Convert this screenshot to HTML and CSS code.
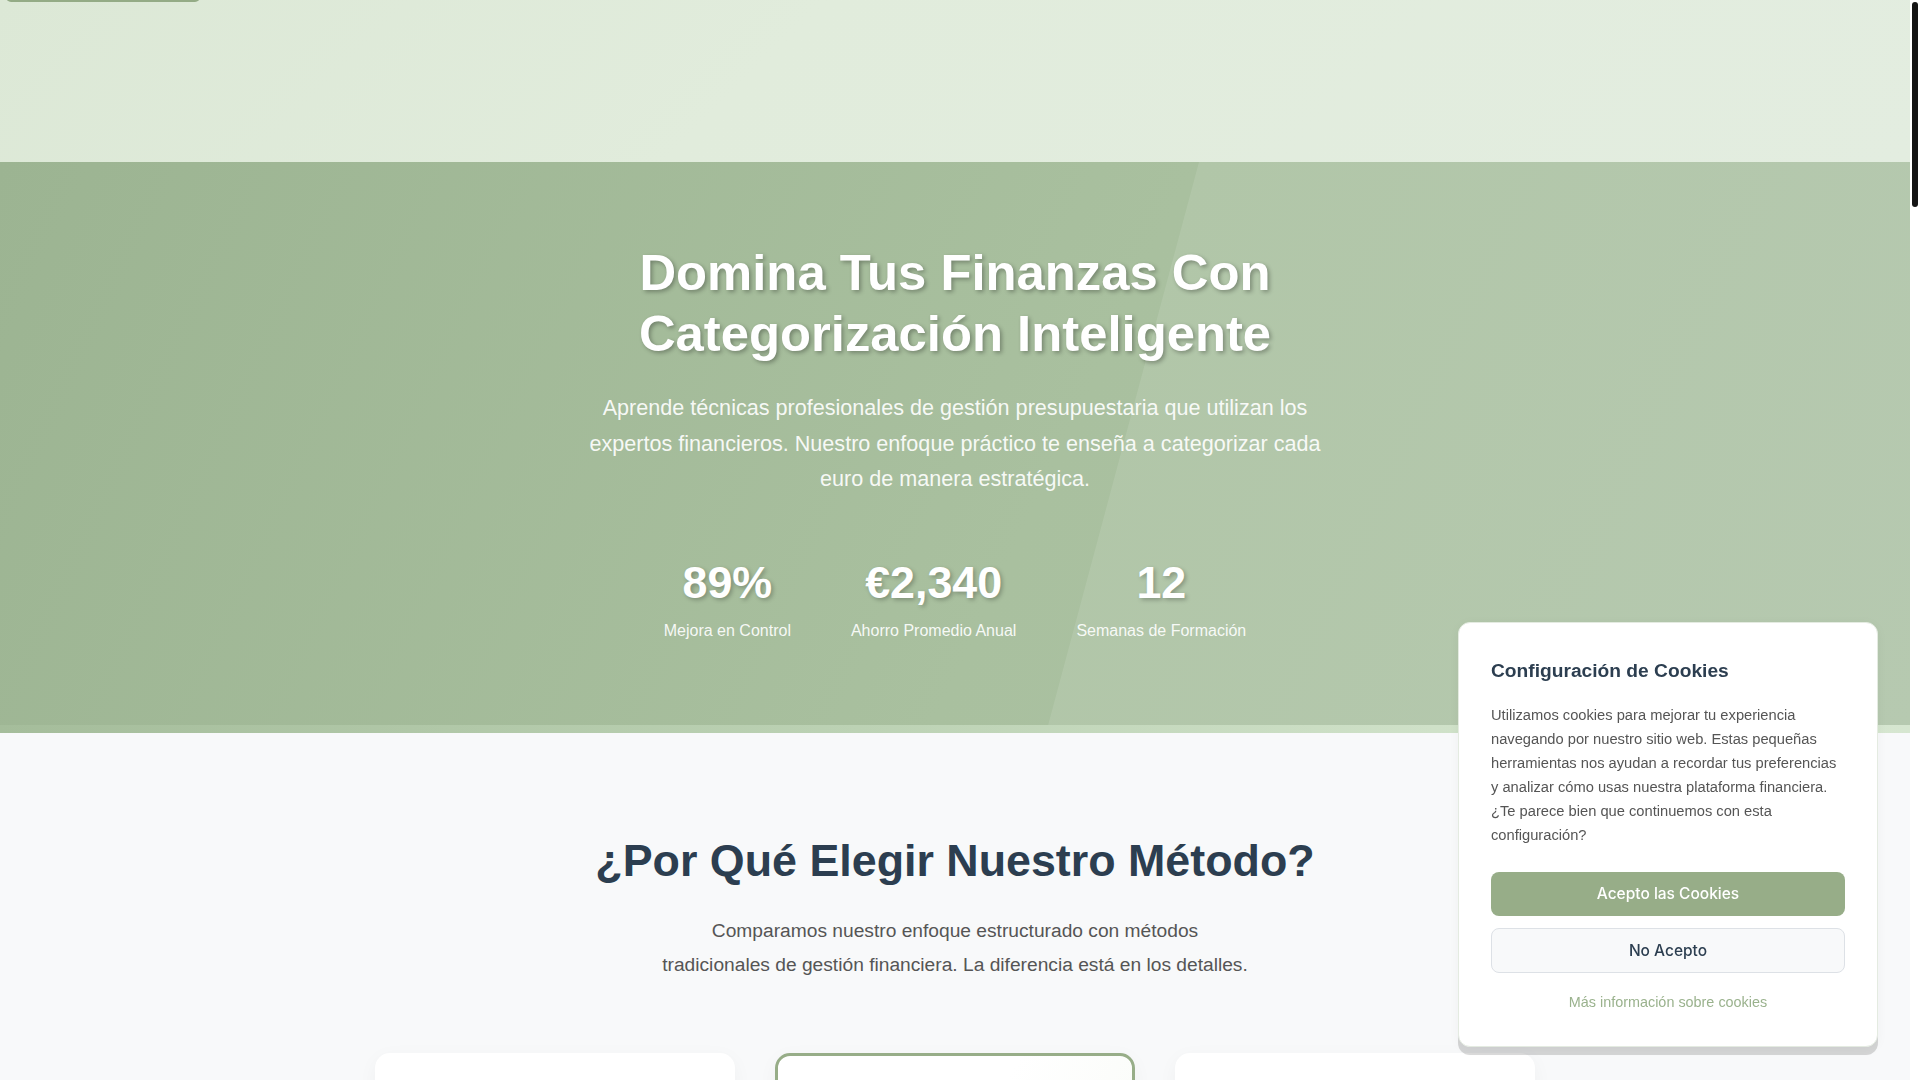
FILE: index.html
```html
<!DOCTYPE html>
<html lang="es">
<head>
    <meta charset="UTF-8">
    <meta name="viewport" content="width=device-width, initial-scale=1.0">
    <title>Categorización Inteligente de Presupuestos</title>
    <link rel="stylesheet" href="styles.css">
</head>
<body>
    <a class="skip-link" href="#inicio">Saltar al contenido</a>

    <!-- cabecera -->
    <header class="site-header"></header>

    <!-- hero -->
    <section class="hero" id="inicio">
        <div class="hero-content">
            <h1 class="hero-title">Domina Tus Finanzas Con Categorización Inteligente</h1>
            <p class="hero-text">
                Aprende técnicas profesionales de gestión presupuestaria que utilizan los expertos financieros. Nuestro enfoque práctico te enseña a categorizar cada euro de manera estratégica.
            </p>
            <div class="hero-stats">
                <div class="stat">
                    <div class="stat-number">89%</div>
                    <div class="stat-label">Mejora en Control</div>
                </div>
                <div class="stat">
                    <div class="stat-number">€2,340</div>
                    <div class="stat-label">Ahorro Promedio Anual</div>
                </div>
                <div class="stat">
                    <div class="stat-number">12</div>
                    <div class="stat-label">Semanas de Formación</div>
                </div>
            </div>
        </div>
    </section>

    <!-- comparativa -->
    <section class="compare">
        <h2 class="section-title">¿Por Qué Elegir Nuestro Método?</h2>
        <p class="section-text">
            Comparamos nuestro enfoque estructurado con métodos tradicionales de gestión financiera. La diferencia está en los detalles.
        </p>
        <div class="compare-grid">
            <div class="compare-card">
                <h3>Método Tradicional</h3>
                <ul>
                    <li>Hojas de cálculo dispersas</li>
                    <li>Categorías genéricas</li>
                    <li>Revisión ocasional</li>
                </ul>
            </div>
            <div class="compare-card featured">
                <h3>Nuestro Método</h3>
                <ul>
                    <li>Sistema de categorías personalizado</li>
                    <li>Revisiones semanales guiadas</li>
                    <li>Objetivos medibles</li>
                </ul>
            </div>
            <div class="compare-card">
                <h3>Apps Automáticas</h3>
                <ul>
                    <li>Clasificación sin contexto</li>
                    <li>Poca flexibilidad</li>
                    <li>Dependencia total</li>
                </ul>
            </div>
        </div>
    </section>

    <section class="program">
        <h2 class="section-title">Programa de Formación</h2>
    </section>

    <section class="testimonials">
        <h2 class="section-title">Lo Que Dicen Nuestros Alumnos</h2>
    </section>

    <footer class="site-footer">
        <p>© 2024 Categorización Inteligente</p>
    </footer>

    <!-- aviso de cookies -->
    <div class="cookie-box">
        <h3 class="cookie-title">Configuración de Cookies</h3>
        <p class="cookie-text">
            Utilizamos cookies para mejorar tu experiencia navegando por nuestro sitio web. Estas pequeñas herramientas nos ayudan a recordar tus preferencias y analizar cómo usas nuestra plataforma financiera. ¿Te parece bien que continuemos con esta configuración?
        </p>
        <div class="cookie-actions">
            <button class="cookie-btn accept">Acepto las Cookies</button>
            <button class="cookie-btn reject">No Acepto</button>
        </div>
        <a class="cookie-link" href="#">Más información sobre cookies</a>
    </div>

    <!-- barra de desplazamiento -->
    <div class="scroll-track"><div class="scroll-thumb"></div></div>
</body>
</html>
```

FILE: styles.css
```css
/* reset */
* {
    margin: 0;
    padding: 0;
    box-sizing: border-box;
}

body {
    margin-right: 10px;
    font-family: 'Liberation Sans', Arial, sans-serif;
    background: #f8f9fa;
    color: #2c3e50;
}

/* barra de desplazamiento */
.scroll-track {
    position: fixed;
    top: 0;
    right: 0;
    width: 10px;
    height: 100%;
    background: #fff;
    z-index: 200;
}

.scroll-thumb {
    margin: 2px 2px 0;
    height: 205px;
    background: #141414;
    border-radius: 3px;
}

.skip-link {
    position: absolute;
    top: -40px;
    left: 6px;
    width: 194px;
    height: 42px;
    background: #94ab86;
    color: transparent;
    border-radius: 0 0 5px 5px;
    z-index: 50;
}

/* cabecera */
.site-header {
    height: 162px;
    background: linear-gradient(135deg, #dce8d6 0%, #e1ecdc 40%, #e3ede0 100%);
}

/* hero */
.hero {
    position: relative;
    overflow: hidden;
    padding: 81px 20px 90px;
    background: linear-gradient(115deg, #9cb492 0%, #a9c09f 55%, #aec3a7 100%);
    color: #fff;
    text-align: center;
}

.hero::before {
    content: '';
    position: absolute;
    top: 0;
    left: 62.8%;
    width: 50%;
    height: 100%;
    background: rgba(255, 255, 255, 0.1);
    transform: skewX(-15deg);
    transform-origin: top left;
}

.hero::after {
    content: '';
    position: absolute;
    left: 0;
    right: 0;
    bottom: 0;
    height: 8px;
    background: linear-gradient(90deg, #a5bd9b 0%, #bcd2b4 45%, #cfe1c8 75%, #d6e6d0 100%);
}

.hero-content {
    position: relative;
    z-index: 1;
}

.hero-title {
    max-width: 800px;
    margin: 0 auto 25px;
    font-size: 50.8px;
    line-height: 1.2;
    font-weight: 700;
    text-shadow: 2px 2px 4px rgba(0, 0, 0, 0.3);
}

.hero-text {
    max-width: 750px;
    margin: 0 auto;
    font-size: 1.35rem;
    line-height: 1.65;
    color: rgba(255, 255, 255, 0.92);
}

.hero-stats {
    display: flex;
    justify-content: center;
    gap: 60px;
    margin-top: 59px;
}

.stat-number {
    font-size: 2.8rem;
    font-weight: 700;
    line-height: 1.2;
    text-shadow: 2px 2px 4px rgba(0, 0, 0, 0.25);
}

.stat-label {
    margin-top: 8px;
    font-size: 1rem;
    line-height: 1.6;
    color: rgba(255, 255, 255, 0.92);
}

/* comparativa */
.compare {
    padding: 101px 20px 100px;
    text-align: center;
}

.section-title {
    font-size: 2.8rem;
    line-height: 1.2;
    font-weight: 700;
    color: #2c3e50;
}

.section-text {
    max-width: 595px;
    margin: 26.5px auto 0;
    font-size: 1.2rem;
    line-height: 1.74;
    color: #555;
}

.compare-grid {
    display: grid;
    grid-template-columns: repeat(3, 360px);
    justify-content: center;
    gap: 40px;
    margin-top: 71.5px;
}

.compare-card {
    min-height: 440px;
    padding: 40px;
    background: #fff;
    border-radius: 15px;
    text-align: left;
    box-shadow: 0 5px 20px rgba(0, 0, 0, 0.04);
}

.compare-card.featured {
    border: 3px solid #97ad88;
    background: linear-gradient(120deg, #fff 40%, #f4f8f1 100%);
}

.compare-card h3 {
    font-size: 1.4rem;
    margin-bottom: 20px;
}

.compare-card li {
    list-style: none;
    padding: 10px 0;
    color: #555;
    border-bottom: 1px solid #eef1ec;
}

.program {
    min-height: 1500px;
    padding: 100px 20px;
    text-align: center;
    background: #fff;
}

.testimonials {
    min-height: 1400px;
    padding: 100px 20px;
    text-align: center;
}

.site-footer {
    min-height: 1144px;
    padding: 60px 20px;
    background: #2c3e50;
    color: #fff;
    text-align: center;
}

/* aviso de cookies */
.cookie-box {
    position: fixed;
    right: 42px;
    bottom: 33px;
    width: 420px;
    padding: 35px 32px 32px;
    background: #fff;
    border: 1px solid #e4ebe1;
    border-radius: 12px;
    box-shadow: 0 8px 0 rgba(0, 0, 0, 0.15), 0 2px 12px rgba(0, 0, 0, 0.04);
    z-index: 100;
}

.cookie-title {
    font-size: 1.2rem;
    line-height: 1.4;
    font-weight: 700;
    color: #2c3e50;
    margin-bottom: 18.5px;
}

.cookie-text {
    font-size: 14.7px;
    line-height: 24px;
    color: #555;
}

.cookie-actions {
    display: flex;
    flex-direction: column;
    gap: 12px;
    margin-top: 25px;
}

.cookie-btn {
    height: 44px;
    border-radius: 8px;
    font-family: Inter, 'Liberation Sans', sans-serif;
    font-size: 15.5px;
    font-weight: 500;
    cursor: pointer;
}

.cookie-btn.accept {
    background: #97ad88;
    color: #fff;
    border: none;
}

.cookie-btn.reject {
    height: 45px;
    background: #f8f9fa;
    color: #2c3e50;
    border: 1px solid #dde1e6;
}

.cookie-link {
    display: block;
    margin-top: 19.5px;
    font-size: 0.9rem;
    line-height: 1.5;
    color: #9ab28d;
    text-align: center;
    text-decoration: none;
}
```
